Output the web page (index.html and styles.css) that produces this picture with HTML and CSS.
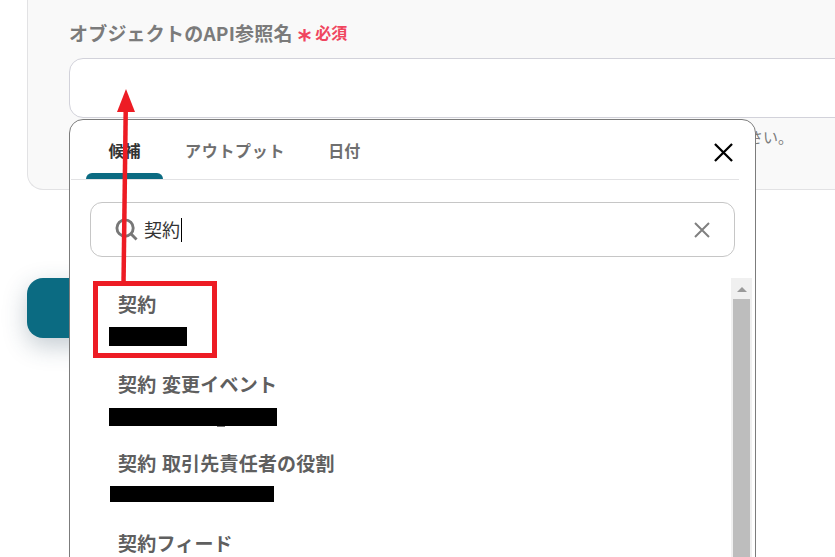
FILE: index.html
```html
<!DOCTYPE html>
<html lang="ja">
<head>
<meta charset="utf-8">
<title>オブジェクトのAPI参照名</title>
<link rel="stylesheet" href="styles.css">
</head>
<body>
<main class="page">
  <section class="panel">
    <div class="label-row">
      <span class="label">オブジェクトのAPI参照名</span>
      <span class="req-star">*</span>
      <span class="req">必須</span>
    </div>
    <div class="field"></div>
    <p class="hint">ください。</p>
  </section>
  <div class="submit"></div>

  <div class="popover">
    <div class="tabs">
      <div class="tab tab-active">候補</div>
      <div class="tab tab-output">アウトプット</div>
      <div class="tab tab-date">日付</div>
      <svg class="close" viewBox="0 0 20 20" aria-hidden="true"><path d="M1 1 L19 19 M19 1 L1 19"/></svg>
    </div>
    <div class="search">
      <svg class="search-icon" viewBox="0 0 24 24" aria-hidden="true"><circle cx="10.5" cy="10.5" r="8.5"/><path d="M16.8 16.8 L22.5 22.5"/></svg>
      <span class="search-text">契約</span><span class="caret"></span>
      <svg class="clear" viewBox="0 0 16 16" aria-hidden="true"><path d="M1 1 L15 15 M15 1 L1 15"/></svg>
    </div>
    <div class="list-wrap">
      <ul class="list">
        <li class="item item-1"><div class="name">契約</div><div class="mask mask-1"></div></li>
        <li class="item item-2"><div class="name">契約 変更イベント</div><div class="mask mask-2"></div></li>
        <li class="item item-3"><div class="name">契約 取引先責任者の役割</div><div class="mask mask-3"></div></li>
        <li class="item item-4"><div class="name">契約フィード</div></li>
      </ul>
      <div class="scrollbar">
        <div class="scroll-up"></div>
        <div class="scroll-thumb"></div>
      </div>
    </div>
  </div>

  <div class="highlight"></div>
  <svg class="arrow" viewBox="0 0 20 200" aria-hidden="true">
    <path class="arrow-line" d="M9.8 16 L7.5 196"/>
    <path class="arrow-head" d="M10 0 L19 23 H1 Z"/>
  </svg>
</main>
</body>
</html>
```
FILE: styles.css
```css
* { box-sizing: border-box; }
html, body {
  margin: 0;
  height: 100%;
  overflow: hidden;
  background: #fff;
}
body {
  font-family: "Noto Sans CJK JP", "Noto Sans", sans-serif;
}
.page {
  position: relative;
  width: 835px;
  height: 557px;
  overflow: hidden;
}
.panel {
  width: 840px;
  height: 190px;
  margin-left: 27px;
  padding: 21px 0 0 41px;
  background: #f9f9f9;
  border: 1px solid #e2e2e4;
  border-top: 0;
  border-right: 0;
  border-radius: 0 0 0 16px;
}
.label-row {
  display: flex;
  align-items: center;
  height: 24px;
}
.label {
  font-size: 19px;
  font-weight: 700;
  line-height: 24px;
  letter-spacing: .2px;
  color: #7b7b7b;
}
.req-star {
  font-family: "DejaVu Sans", sans-serif;
  font-size: 26px;
  font-weight: 700;
  line-height: 24px;
  height: 24px;
  margin-left: 5px;
  padding-top: 7px;
  color: #f0465f;
}
.req {
  margin-left: 4px;
  margin-top: -2px;
  font-size: 16px;
  font-weight: 700;
  line-height: 24px;
  color: #f0465f;
}
.field {
  width: 780px;
  height: 60px;
  margin-top: 13px;
  background: #fff;
  border: 1px solid #d2d2da;
  border-radius: 14px;
}
.hint {
  margin: 9px 0 0;
  padding-left: 649px;
  font-size: 15px;
  line-height: 20px;
  color: #7b7b7b;
  white-space: nowrap;
}
.submit {
  width: 300px;
  height: 60px;
  margin: 88px 0 0 27px;
  background: #0b6b82;
  border-radius: 16px;
  box-shadow: 0 8px 24px rgba(40, 70, 90, .28);
}
.popover {
  position: absolute;
  left: 69px;
  top: 119px;
  width: 687px;
  height: 460px;
  background: #fff;
  border: 1px solid #7c7c7c;
  border-radius: 14px;
  padding: 0 0 0 1px;
}
.tabs {
  position: relative;
  display: flex;
  height: 60px;
  width: 668px;
  border-bottom: 1px solid #e2e2e4;
}
.tab {
  font-size: 16px;
  font-weight: 700;
  line-height: 22px;
  padding-top: 19px;
  color: #6f6f6f;
}
.tab-active {
  width: 77px;
  margin-left: 15px;
  text-align: center;
  color: #333;
  position: relative;
}
.tab-active::after {
  content: "";
  position: absolute;
  left: 0;
  right: 0;
  bottom: 0;
  height: 6px;
  background: #0b6b82;
  border-radius: 6px 6px 0 0;
}
.tab-output { margin-left: 22px; letter-spacing: .7px; }
.tab-date { margin-left: 43px; }
.close {
  position: absolute;
  left: 643px;
  top: 23px;
  width: 19px;
  height: 19px;
  fill: none;
  stroke: #000;
  stroke-width: 2.4;
}
.search {
  display: flex;
  align-items: center;
  position: relative;
  width: 645px;
  height: 55px;
  margin: 22px 0 0 19px;
  padding-left: 24px;
  border: 1px solid #c6c6c6;
  border-radius: 12px;
}
.search-icon {
  width: 23px;
  height: 23px;
  flex: none;
  fill: none;
  stroke: #777;
  stroke-width: 3;
}
.search-text {
  margin-left: 6px;
  font-size: 18px;
  line-height: 24px;
  position: relative;
  top: -1px;
  color: #333;
}
.caret {
  width: 1px;
  height: 24px;
  margin-left: 1px;
  background: #000;
}
.clear {
  position: absolute;
  right: 24px;
  top: 19px;
  width: 16px;
  height: 16px;
  fill: none;
  stroke: #808080;
  stroke-width: 2;
}
.list-wrap {
  display: flex;
  margin-top: 21px;
}
.list {
  list-style: none;
  margin: 0;
  padding: 0;
  width: 660px;
}
.item { position: relative; height: 80px; }
.name {
  padding: 14px 0 0 47px;
  font-size: 19px;
  font-weight: 700;
  line-height: 24px;
  letter-spacing: .2px;
  word-spacing: 1px;
  color: #5f5f5f;
  white-space: nowrap;
}
.mask { background: #000; height: 19px; }
.mask-1 { width: 78px; margin: 11px 0 0 38px; }
.mask-2 { width: 168px; height: 18px; margin: 12px 0 0 38px; position: relative; }
.mask-2::after {
  content: "";
  position: absolute;
  left: 108px;
  top: 18px;
  width: 8px;
  height: 1px;
  background: #777;
}
.mask-3 { width: 164px; height: 16px; margin: 11px 0 0 39px; }
.item-3 { margin-top: -1px; }
.scrollbar {
  width: 21px;
  height: 300px;
  background: #f0f0f0;
}
.scroll-up {
  height: 21px;
  position: relative;
}
.scroll-up::after {
  content: "";
  position: absolute;
  left: 6px;
  top: 9px;
  border-left: 5px solid transparent;
  border-right: 5px solid transparent;
  border-bottom: 5px solid #9a9a9a;
}
.scroll-thumb {
  width: 17px;
  height: 280px;
  margin-left: 2px;
  background: #bdbdbd;
}
.highlight {
  position: absolute;
  left: 93px;
  top: 281px;
  width: 124px;
  height: 77px;
  border: 5px solid #ed1c24;
}
.arrow {
  position: absolute;
  left: 116px;
  top: 89px;
  width: 20px;
  height: 200px;
}
.arrow-line { stroke: #ed1c24; stroke-width: 4.5; fill: none; }
.arrow-head { fill: #ed1c24; }
```
